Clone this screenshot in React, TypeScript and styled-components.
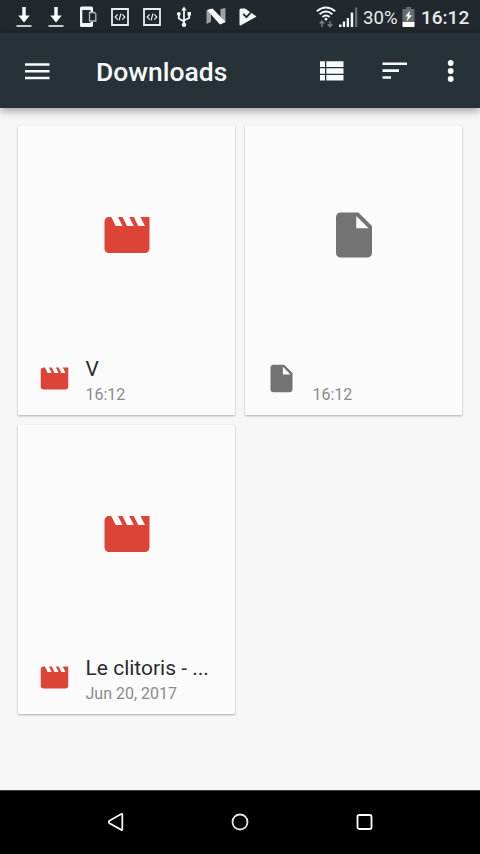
import React from "react";
import styled, { createGlobalStyle } from "styled-components";

const GlobalStyle = createGlobalStyle`
  * { box-sizing: border-box; }
  html, body { margin: 0; padding: 0; overflow: hidden; }
  body { font-family: Roboto, "Liberation Sans", sans-serif; background: #f6f6f6; }
  svg { display: block; flex: none; }
`;

const Screen = styled.div`
  width: 480px;
  height: 854px;
  display: flex;
  flex-direction: column;
  background: #f6f6f6;
`;

const StatusBar = styled.header`
  height: 33px;
  flex: none;
  display: flex;
  align-items: center;
  padding: 0 11px 0 8px;
  background: #22282d;
  color: #e9ebec;
`;

const Notifications = styled.div`
  display: flex;
  flex: 1;
`;

const NotificationSlot = styled.div`
  width: 32px;
  height: 33px;
  display: flex;
  align-items: center;
  justify-content: center;
`;

const SystemIcons = styled.div`
  display: flex;
  align-items: center;
  height: 33px;
`;

const SignalGroup = styled.div`
  display: flex;
  align-items: center;
  gap: 3px;
`;

const BatteryLevel = styled.span`
  width: 36px;
  margin: 2px 3px 0 5px;
  font-size: 18.6px;
  line-height: 22px;
  white-space: nowrap;
`;

const Clock = styled.span`
  width: 48px;
  margin: 2px 0 0 6px;
  font-size: 19px;
  font-weight: 500;
  line-height: 22px;
  white-space: nowrap;
`;

const Toolbar = styled.nav`
  height: 75px;
  flex: none;
  z-index: 1;
  display: flex;
  align-items: center;
  padding: 0 13px 0 21px;
  background: #273238;
  color: #f7fafb;
  box-shadow: 0 2px 9px rgba(0, 0, 0, 0.42);
`;

const Title = styled.h1`
  flex: 1;
  margin: 3px 0 0 43px;
  font-size: 26.5px;
  font-weight: 500;
  line-height: 32px;
`;

const IconButton = styled.button<{ $gap?: number }>`
  margin: 0 0 0 ${(p) => p.$gap ?? 0}px;
  padding: 0;
  border: 0;
  background: none;
  color: inherit;
`;

const FileGrid = styled.main`
  flex: 1;
  display: grid;
  grid-template-columns: 217px 217px;
  grid-auto-rows: 289px;
  gap: 10px;
  padding: 18px 0 0 18px;
`;

const Card = styled.article`
  display: flex;
  flex-direction: column;
  background: #fbfbfb;
  box-shadow: 0 1px 2px rgba(0, 0, 0, 0.3);
`;

const Preview = styled.div`
  height: 217px;
  display: flex;
  align-items: center;
  justify-content: center;
`;

const Details = styled.div`
  flex: 1;
  display: flex;
  padding-left: 20px;
`;

const TypeIcon = styled.div`
  width: 33px;
  height: 71px;
  display: flex;
  align-items: center;
`;

const Labels = styled.div`
  margin: 13px 0 0 14.5px;
`;

const FileName = styled.div`
  height: 26px;
  font-size: 21px;
  line-height: 26px;
  color: #2b2b2b;
  white-space: nowrap;
`;

const FileDate = styled.div`
  font-size: 16px;
  line-height: 25px;
  color: #8b8b8b;
  white-space: nowrap;
`;

const NavBar = styled.footer`
  height: 64px;
  flex: none;
  display: flex;
  align-items: center;
  justify-content: space-between;
  padding: 0 105px 2px;
  background: #000;
  border-top: 1px solid #3c3f40;
`;

type Kind = "video" | "file";

const FileIcon = ({ kind, size }: { kind: Kind; size: number }) => (
  <svg width={size} height={size} viewBox="0 0 24 24" fill={kind === "video" ? "#db4437" : "#737373"}>
    {kind === "video" ? (
      <path d="M18 4l2 4h-3l-2-4h-2l2 4h-3l-2-4H8l2 4H7L5 4H4c-1.1 0-2 .9-2 2v12c0 1.1.9 2 2 2h16c1.1 0 2-.9 2-2V4z" />
    ) : (
      <path d="M6 2c-1.1 0-2 .9-2 2v16c0 1.1.9 2 2 2h12c1.1 0 2-.9 2-2V8l-6-6zm7 7V3.5L18.500 9z" />
    )}
  </svg>
);

const DownloadIcon = () => (
  <svg width="16" height="22" viewBox="0 0 16 22">
    <path d="M6.300 1h3.400v8.500h4L8 16.500 2.300 9.500h4z" fill="#fff" />
    <path d="M.5 19h15v2H.5z" fill="#c9cccd" />
  </svg>
);

const PhoneIcon = () => (
  <svg width="18" height="22" viewBox="0 0 18 22">
    <path fillRule="evenodd" fill="#f4f6f6" d="M2.500.5h10q1.500 0 1.500 1.500v4.500h-2.500V4H3.300v13h8.200v-1H14v3.500q0 1.500-1.500 1.500h-10Q1 21 1 19.500V2Q1 .5 2.500.5z" />
    <path d="M10.500 6.500h4.800l1.500 1.500v7h-6.300z" fill="#22282d" stroke="#b7bcbe" strokeWidth="1.300" />
  </svg>
);

const CodeIcon = () => (
  <svg width="18" height="18" viewBox="0 0 18 18" fill="none" stroke="#eceeee">
    <path d="M1 1h16v16H1z" strokeWidth="1.800" />
    <path d="M6.700 6.400 4.200 9l2.500 2.600M11.300 6.400 13.800 9l-2.500 2.600M9.900 5.700l-1.800 6.600" strokeWidth="1.200" />
  </svg>
);

const UsbIcon = () => (
  <svg width="16" height="22" viewBox="0 0 16 22" fill="none" stroke="#f4f6f6" strokeWidth="1.800">
    <path d="M8 3v16M8 15.500 2.800 12.500V8M8 14.500l5.200-2.500V8" />
    <path d="M8 .5l2.700 4H5.300zM11.500 6h3.500v3.400h-3.500z" fill="#f4f6f6" stroke="none" />
    <circle cx="2.800" cy="7.800" r="1.900" fill="#f4f6f6" stroke="none" />
    <circle cx="8" cy="18.800" r="2.200" fill="#f4f6f6" stroke="none" />
  </svg>
);

const NougatIcon = () => (
  <svg width="20" height="17" viewBox="0 0 20 17">
    <path d="M.5 2.500 5 .8v13L.5 16zM14.500 1l5-1v14l-5 2z" fill="#9da1a3" />
    <path d="M1 2 6.500.5l13 13.500-5.500 2.500z" fill="#fff" />
  </svg>
);

const PlayCheckIcon = () => (
  <svg width="18" height="18" viewBox="0 0 18 18">
    <path d="M2 .5h4l10.800 7.400q.9.600 0 1.200l-14.800 8.200q-1.500.7-1.500-.8V2Q.5.500 2 .5z" fill="#f4f6f6" />
    <path d="m4.200 5.800 3.300 3.400 6-6.700" fill="none" stroke="#22282d" strokeWidth="1.800" />
  </svg>
);

const WifiIcon = () => (
  <svg width="20" height="22" viewBox="0 0 20 22" fill="none" stroke="#f4f6f6" strokeWidth="2">
    <path d="M.8 5.200Q10-2.200 19.200 5.200M3.600 8.200q6.400-5.300 12.800 0M6.400 11q3.600-2.900 7.200 0" />
    <circle cx="10" cy="13.200" r="1.400" fill="#f4f6f6" stroke="none" />
    <path d="M6 21v-5.500M3.800 17.500 6 15l2.200 2.500M14 15v5.500M11.800 18.300 14 20.800l2.200-2.500" stroke="#7c8285" strokeWidth="1.400" />
  </svg>
);

const SignalIcon = () => (
  <svg width="19" height="20" viewBox="0 0 19 20" fill="#f4f6f6">
    <path d="M0 17.500h2.500V20H0zM3.800 14.500h2.300V20H3.800zM7.700 11h2.300v9H7.700zM11.700 5.500h2.500V20h-2.500z" />
    <path d="M16 .5h2.300V20H16z" fill="#6b7174" />
  </svg>
);

const BatteryIcon = () => (
  <svg width="13" height="20" viewBox="0 0 13 20">
    <path d="M4 0h5v2h3.500v14H.5V2H4z" fill="#666d71" />
    <path d="M.5 15h12v5H.5zM8 3.500 3.300 9.500h2.700L4.500 14.500 10 8.300H7.300z" fill="#fff" />
  </svg>
);

const notifications = [DownloadIcon, DownloadIcon, PhoneIcon, CodeIcon, CodeIcon, UsbIcon, NougatIcon, PlayCheckIcon];

const files: { kind: Kind; name: string; date: string }[] = [
  { kind: "video", name: "V", date: "16:12" },
  { kind: "file", name: "", date: "16:12" },
  { kind: "video", name: "Le clitoris - ...", date: "Jun 20, 2017" },
];

export default function App() {
  return (
    <>
      <GlobalStyle />
      <Screen>
        <StatusBar>
          <Notifications>
            {notifications.map((Icon, i) => (
              <NotificationSlot key={i}>
                <Icon />
              </NotificationSlot>
            ))}
          </Notifications>
          <SystemIcons>
            <SignalGroup>
              <WifiIcon />
              <SignalIcon />
            </SignalGroup>
            <BatteryLevel>30%</BatteryLevel>
            <BatteryIcon />
            <Clock>16:12</Clock>
          </SystemIcons>
        </StatusBar>
        <Toolbar>
          <IconButton aria-label="Menu">
            <svg width="32" height="32" viewBox="0 0 32 32" fill="currentColor">
              <path d="M4 8.200h24.500v2.600H4zM4 15h24.500v2.600H4zM4 21.700h24.500v2.600H4z" />
            </svg>
          </IconButton>
          <Title>Downloads</Title>
          <IconButton aria-label="List view">
            <svg width="32" height="32" viewBox="0 0 32 32" fill="currentColor">
              <path d="M5 6.300h5v5.800H5zM11.300 6.300H28.500v5.800H11.300zM5 13.200h5v5.500H5zM11.300 13.200H28.500v5.500H11.300zM5 19.900h5v5.600H5zM11.300 19.900H28.500v5.600H11.300z" />
            </svg>
          </IconButton>
          <IconButton aria-label="Sort" $gap={32}>
            <svg width="32" height="32" viewBox="0 0 32 32" fill="currentColor">
              <path d="M3.500 7.500H28v2.600H3.500zM3.500 14.300H20v2.600H3.500zM3.500 21.200H12v2.600H3.500z" />
            </svg>
          </IconButton>
          <IconButton aria-label="More options" $gap={24}>
            <svg width="32" height="32" viewBox="0 0 32 32" fill="currentColor">
              <circle cx="15.700" cy="8" r="2.900" />
              <circle cx="15.700" cy="16" r="2.900" />
              <circle cx="15.700" cy="24" r="2.900" />
            </svg>
          </IconButton>
        </Toolbar>
        <FileGrid>
          {files.map((file, i) => (
            <Card key={i}>
              <Preview>
                <FileIcon kind={file.kind} size={54} />
              </Preview>
              <Details>
                <TypeIcon>
                  <FileIcon kind={file.kind} size={33} />
                </TypeIcon>
                <Labels>
                  <FileName>{file.name}</FileName>
                  <FileDate>{file.date}</FileDate>
                </Labels>
              </Details>
            </Card>
          ))}
        </FileGrid>
        <NavBar>
          <svg width="20" height="20" viewBox="0 0 20 20" fill="none" stroke="#f2f2f2" strokeWidth="1.800">
            <path d="M17.300 2.500v14.800q0 1-1 .6L4.500 11.200q-1.500-1.200 0-2.400L16.200 2q1.100-.5 1.100.5z" />
          </svg>
          <svg width="20" height="20" viewBox="0 0 20 20" fill="none" stroke="#e6e6e6" strokeWidth="1.800">
            <circle cx="10" cy="10" r="7.500" />
          </svg>
          <svg width="20" height="20" viewBox="0 0 20 20" fill="none" stroke="#fff" strokeWidth="1.800">
            <rect x="2.500" y="3" width="14" height="14" rx="1.800" />
          </svg>
        </NavBar>
      </Screen>
    </>
  );
}
